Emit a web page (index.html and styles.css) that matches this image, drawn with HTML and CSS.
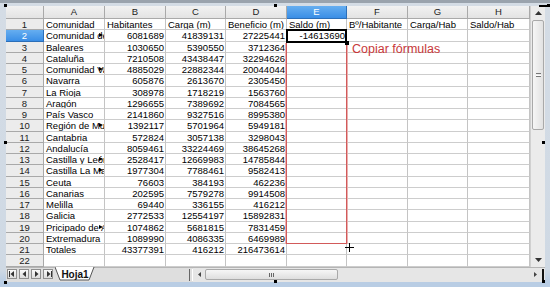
FILE: index.html
```html
<!DOCTYPE html>
<html>
<head>
<meta charset="utf-8">
<link rel="stylesheet" href="styles.css">
</head>
<body>
<div class="frame">
  <div class="win">
    <div class="main">
      <div class="sheet">
        <div class="grid">
          <div class="ch corner"></div><div class="ch">A</div><div class="ch">B</div><div class="ch">C</div><div class="ch">D</div><div class="ch sel">E</div><div class="ch">F</div><div class="ch">G</div><div class="ch">H</div>
          <div class="rh">1</div><div class="c">Comunidad</div><div class="c">Habitantes</div><div class="c">Carga (m)</div><div class="c">Beneficio (m)</div><div class="c">Saldo (m)</div><div class="c">Bº/Habitante</div><div class="c">Carga/Hab</div><div class="c">Saldo/Hab</div>
          <div class="rh sel">2</div><div class="c o">Comunidad de Madrid</div><div class="c n">6081689</div><div class="c n">41839131</div><div class="c n">27225441</div><div class="c n">-14613690</div><div class="c"></div><div class="c"></div><div class="c"></div>
          <div class="rh">3</div><div class="c">Baleares</div><div class="c n">1030650</div><div class="c n">5390550</div><div class="c n">3712364</div><div class="c"></div><div class="c"></div><div class="c"></div><div class="c"></div>
          <div class="rh">4</div><div class="c">Cataluña</div><div class="c n">7210508</div><div class="c n">43438447</div><div class="c n">32294626</div><div class="c"></div><div class="c"></div><div class="c"></div><div class="c"></div>
          <div class="rh">5</div><div class="c o">Comunidad Valenciana</div><div class="c n">4885029</div><div class="c n">22882344</div><div class="c n">20044044</div><div class="c"></div><div class="c"></div><div class="c"></div><div class="c"></div>
          <div class="rh">6</div><div class="c">Navarra</div><div class="c n">605876</div><div class="c n">2613670</div><div class="c n">2305450</div><div class="c"></div><div class="c"></div><div class="c"></div><div class="c"></div>
          <div class="rh">7</div><div class="c">La Rioja</div><div class="c n">308978</div><div class="c n">1718219</div><div class="c n">1563760</div><div class="c"></div><div class="c"></div><div class="c"></div><div class="c"></div>
          <div class="rh">8</div><div class="c">Aragón</div><div class="c n">1296655</div><div class="c n">7389692</div><div class="c n">7084565</div><div class="c"></div><div class="c"></div><div class="c"></div><div class="c"></div>
          <div class="rh">9</div><div class="c">País Vasco</div><div class="c n">2141860</div><div class="c n">9327516</div><div class="c n">8995380</div><div class="c"></div><div class="c"></div><div class="c"></div><div class="c"></div>
          <div class="rh">10</div><div class="c o">Región de Murcia</div><div class="c n">1392117</div><div class="c n">5701964</div><div class="c n">5949181</div><div class="c"></div><div class="c"></div><div class="c"></div><div class="c"></div>
          <div class="rh">11</div><div class="c">Cantabria</div><div class="c n">572824</div><div class="c n">3057138</div><div class="c n">3298043</div><div class="c"></div><div class="c"></div><div class="c"></div><div class="c"></div>
          <div class="rh">12</div><div class="c">Andalucía</div><div class="c n">8059461</div><div class="c n">33224469</div><div class="c n">38645268</div><div class="c"></div><div class="c"></div><div class="c"></div><div class="c"></div>
          <div class="rh">13</div><div class="c o">Castilla y León</div><div class="c n">2528417</div><div class="c n">12669983</div><div class="c n">14785844</div><div class="c"></div><div class="c"></div><div class="c"></div><div class="c"></div>
          <div class="rh">14</div><div class="c o">Castilla La Mancha</div><div class="c n">1977304</div><div class="c n">7788461</div><div class="c n">9582413</div><div class="c"></div><div class="c"></div><div class="c"></div><div class="c"></div>
          <div class="rh">15</div><div class="c">Ceuta</div><div class="c n">76603</div><div class="c n">384193</div><div class="c n">462236</div><div class="c"></div><div class="c"></div><div class="c"></div><div class="c"></div>
          <div class="rh">16</div><div class="c">Canarias</div><div class="c n">202595</div><div class="c n">7579278</div><div class="c n">9914508</div><div class="c"></div><div class="c"></div><div class="c"></div><div class="c"></div>
          <div class="rh">17</div><div class="c">Melilla</div><div class="c n">69440</div><div class="c n">336155</div><div class="c n">416212</div><div class="c"></div><div class="c"></div><div class="c"></div><div class="c"></div>
          <div class="rh">18</div><div class="c">Galicia</div><div class="c n">2772533</div><div class="c n">12554197</div><div class="c n">15892831</div><div class="c"></div><div class="c"></div><div class="c"></div><div class="c"></div>
          <div class="rh">19</div><div class="c o">Pricipado de Asturias</div><div class="c n">1074862</div><div class="c n">5681815</div><div class="c n">7831459</div><div class="c"></div><div class="c"></div><div class="c"></div><div class="c"></div>
          <div class="rh">20</div><div class="c">Extremadura</div><div class="c n">1089990</div><div class="c n">4086335</div><div class="c n">6469989</div><div class="c"></div><div class="c"></div><div class="c"></div><div class="c"></div>
          <div class="rh">21</div><div class="c">Totales</div><div class="c n">43377391</div><div class="c n">416212</div><div class="c n">216473614</div><div class="c"></div><div class="c"></div><div class="c"></div><div class="c"></div>
          <div class="rh">22</div><div class="c"></div><div class="c"></div><div class="c"></div><div class="c"></div><div class="c"></div><div class="c"></div><div class="c"></div><div class="c"></div>
        </div>
        <div class="grid overlay">
          <div class="active"><span class="fill"></span></div>
          <div class="copybox"></div>
          <div class="note">Copiar fórmulas</div>
        </div>
        <svg class="cross" width="9" height="9" viewBox="0 0 9 9"><path d="M4.5 0V9M0 4.5H9" stroke="#000" stroke-width="1"/></svg>
      </div>
      <div class="vs">
        <div class="vbtn"><svg width="7" height="4" viewBox="0 0 7 4"><path d="M0 4L3.5 0L7 4Z" fill="#333"/></svg></div>
        <div class="vthumb"><span class="grip-h"></span></div>
        <div class="vtrack"></div>
        <div class="vbtn"><svg width="7" height="4" viewBox="0 0 7 4"><path d="M0 0L3.5 4L7 0Z" fill="#333"/></svg></div>
      </div>
    </div>
    <div class="tabbar">
      <div class="nav">
        <div class="nb"><svg width="7" height="6" viewBox="0 0 7 6"><path d="M0.5 0V6" stroke="#333"/><path d="M1.5 3L5 0V6Z" fill="#333"/></svg></div>
        <div class="nb"><svg width="5" height="6" viewBox="0 0 5 6"><path d="M0.5 3L4 0V6Z" fill="#333"/></svg></div>
        <div class="nb"><svg width="5" height="6" viewBox="0 0 5 6"><path d="M4.5 3L1 0V6Z" fill="#333"/></svg></div>
        <div class="nb"><svg width="7" height="6" viewBox="0 0 7 6"><path d="M6.5 0V6" stroke="#333"/><path d="M5.5 3L2 0V6Z" fill="#333"/></svg></div>
      </div>
      <div class="tab">
        <svg class="tabshape" width="40" height="14" viewBox="0 0 40 14"><path d="M0 0L5 13H34L39 0" fill="#fff" stroke="#555" stroke-width="1"/></svg>
        <span class="tabtext">Hoja1</span>
      </div>
      <div class="tabspace"></div>
      <div class="sep"></div>
      <div class="hs">
        <div class="hbtn"><svg width="3" height="5" viewBox="0 0 3 5"><path d="M0 2.5L3 0V5Z" fill="#444"/></svg></div>
        <div class="hthumb"><span class="grip-v"></span></div>
        <div class="htrack"></div>
        <div class="hbtn"><svg width="3" height="5" viewBox="0 0 3 5"><path d="M3 2.5L0 0V5Z" fill="#444"/></svg></div>
        <div class="hend"></div>
      </div>
    </div>
  </div>
  <span class="h h1"></span><span class="h h2"></span><span class="h h3"></span>
  <span class="h h4"></span><span class="h h5"></span>
  <span class="h h6"></span><span class="h h7"></span><span class="h h8"></span>
  <span class="topbar"></span>
</div>
</body>
</html>
```
FILE: styles.css
```css
html, body {
  margin: 0;
  padding: 0;
}
body {
  width: 550px;
  height: 287px;
  overflow: hidden;
  font-family: "Liberation Sans", Arial, sans-serif;
}
.frame {
  position: relative;
  width: 550px;
  height: 287px;
  box-sizing: border-box;
  padding: 6px 5px 5px 6px;
  background: linear-gradient(#9aa3ad 0, #9aa3ad 3px, #d4dce5 3px, #cfd9e4 270px, #b9cde4 282px, #b9cde4 100%);
}
.win {
  display: flex;
  flex-direction: column;
  height: 276px;
  background: #fff;
}
.main {
  display: flex;
  height: 260.5px;
}
.sheet {
  position: relative;
  width: 524px;
}
.grid {
  display: grid;
  grid-template-columns: 38px 61px 61px 60px 61px 60px 61px 60px 62px;
  grid-template-rows: 13px repeat(22, 11.25px);
  font-size: 9.5px;
  line-height: 11px;
  color: #000;
}
.overlay {
  position: absolute;
  inset: 0;
}
.ch, .rh {
  box-sizing: border-box;
  background: #ececec;
  border-right: 1px solid #a9a9a9;
  border-bottom: 1px solid #a9a9a9;
  text-align: center;
  color: #222;
}
.ch {
  line-height: 12px;
  background: linear-gradient(#f2f2f2, #e3e3e3);
}
.rh {
  line-height: 11px;
}
.ch.sel, .rh.sel {
  background: linear-gradient(#66aef0, #3a8ee6);
  color: #fff;
  border-color: #2c6fb8;
}
.c {
  position: relative;
  box-sizing: border-box;
  border-right: 1px solid #c4c4c4;
  border-bottom: 1px solid #cdcdcd;
  padding: 0 2px;
  white-space: nowrap;
  overflow: hidden;
}
.c.n {
  text-align: right;
  padding-right: 1px;
  overflow: visible;
}
.c.o {
  padding-right: 6px;
  text-overflow: clip;
}
.c.o::after {
  content: "";
  position: absolute;
  right: 1px;
  top: 3px;
  border-left: 4px solid #000;
  border-top: 2.5px solid transparent;
  border-bottom: 2.5px solid transparent;
}
.active {
  grid-column: 6;
  grid-row: 3;
  position: relative;
  margin: -1px 0 -1px -1px;
  border: 2px solid #000;
}
.fill {
  position: absolute;
  right: -4px;
  bottom: -4px;
  width: 4px;
  height: 4px;
  background: #000;
}
.copybox {
  grid-column: 6;
  grid-row: 4 / 22;
  margin-left: -1px;
  margin-top: 1px;
  border: 1px solid #d25a5a;
  border-top: none;
  box-shadow: 1px 0 0 #eab0b0, -1px 0 0 #eab0b0;
}
.note {
  grid-column: 7 / 10;
  grid-row: 4;
  margin-left: 5px;
  margin-top: 0;
  font-size: 12.5px;
  line-height: 14px;
  color: #c8383a;
  white-space: nowrap;
}
.cross {
  position: absolute;
  left: 339px;
  top: 237px;
}
.vs {
  width: 15px;
  display: flex;
  flex-direction: column;
  background: #ebebeb;
  border-left: 1px solid #d0d0d0;
  box-sizing: border-box;
}
.vbtn {
  height: 14px;
  display: flex;
  align-items: center;
  justify-content: center;
}
.vthumb {
  height: 108px;
  margin: 0 1px;
  border: 1px solid #a9a9a9;
  border-radius: 2px;
  background: linear-gradient(90deg, #f6f6f6, #e2e2e2);
  display: flex;
  align-items: center;
  justify-content: center;
}
.grip-h {
  width: 5px;
  height: 4px;
  border-top: 1px solid #777;
  border-bottom: 1px solid #777;
  background: linear-gradient(#fff 0, #fff 1px, #777 1px, #777 2px, transparent 2px);
  background-position: 0 1px;
  background-repeat: no-repeat;
  box-sizing: border-box;
}
.vtrack {
  flex: 1;
}
.tabbar {
  height: 15.5px;
  display: flex;
  align-items: stretch;
  background: #dedede;
  border-top: 1px solid #b5b5b5;
  box-sizing: border-box;
}
.nav {
  display: flex;
  gap: 2px;
  padding: 1px 0 0 1px;
}
.nb {
  width: 10px;
  height: 10px;
  box-sizing: border-box;
  border: 1px solid #8f8f8f;
  background: linear-gradient(#fafafa, #dcdcdc);
  display: flex;
  align-items: center;
  justify-content: center;
}
.tab {
  position: relative;
  width: 40px;
  margin-left: 2px;
  display: flex;
  justify-content: center;
}
.tabshape {
  position: absolute;
  left: 0;
  top: -1px;
}
.tabtext {
  position: relative;
  font-weight: bold;
  font-size: 10px;
  line-height: 13px;
  color: #111;
}
.tabspace {
  width: 94px;
}
.sep {
  width: 2px;
  margin: 1px 0;
  border-left: 1px solid #666;
  border-right: 1px solid #fff;
}
.hs {
  flex: 1;
  display: flex;
  align-items: center;
  background: #e6e6e6;
  padding: 1px 0;
}
.hbtn {
  width: 12px;
  height: 11px;
  display: flex;
  align-items: center;
  justify-content: center;
}
.hthumb {
  width: 133px;
  height: 11px;
  box-sizing: border-box;
  border: 1px solid #a9a9a9;
  border-radius: 2px;
  background: linear-gradient(#f6f6f6, #dedede);
  display: flex;
  align-items: center;
  justify-content: center;
}
.grip-v {
  width: 5px;
  height: 4px;
  border-left: 1px solid #666;
  border-right: 1px solid #666;
  box-sizing: border-box;
  background: linear-gradient(90deg, transparent 1px, #666 1px, #666 2px, transparent 2px);
}
.htrack {
  flex: 1;
}
.hend {
  width: 2px;
  height: 12px;
  background: #111;
  margin: 0 1px;
}
.h {
  position: absolute;
  width: 3px;
  height: 3px;
  background: #000;
}
.h1 { left: 4px; top: 4px; }
.h2 { left: 274px; top: 4px; }
.h3 { left: 547px; top: 4px; }
.h4 { left: 4px; top: 141px; }
.h5 { left: 542px; top: 141px; }
.h6 { left: 4px; top: 281px; }
.h7 { left: 274px; top: 280px; }
.h8 { left: 542px; top: 280px; }
.topbar {
  position: absolute;
  left: 539px;
  top: 5px;
  width: 9px;
  height: 2px;
  background: #000;
}
```
